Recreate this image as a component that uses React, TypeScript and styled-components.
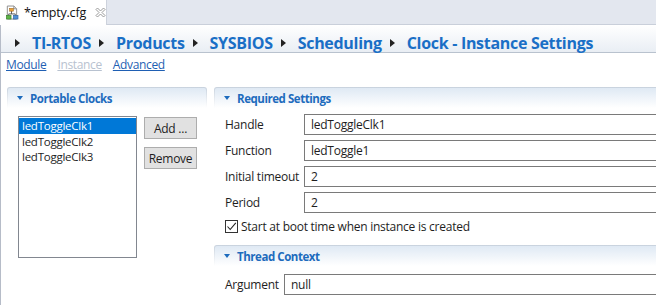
import styled, {createGlobalStyle} from 'styled-components'

const GlobalStyle = createGlobalStyle`
  html, body {
    margin: 0;
    padding: 0;
    background: #fff;
    overflow: hidden;
  }
  body {
    font-family: "Open Sans", "Noto Sans", sans-serif;
    font-size: 12px;
    letter-spacing: -0.25px;
    color: #1e1e1e;
  }
`

const Window = styled.div`
  width: 760px;
  height: 305px;
  display: flex;
  flex-direction: column;
`

const TabStrip = styled.div`
  height: 24px;
  display: flex;
  background: #e3e7ef;
  border-bottom: 1px solid #c9cfda;
`

const Tab = styled.div`
  width: 107px;
  height: 25px;
  box-sizing: border-box;
  display: flex;
  align-items: center;
  gap: 4px;
  padding-left: 5px;
  background: #fff;
  border-right: 1px solid #cdd2dc;
  margin-bottom: -1px;
  font-size: 12.5px;
  letter-spacing: -0.2px;
  color: #111;
`

const TabClose = styled.span`
  display: flex;
  margin-left: 5px;
`

const Editor = styled.div`
  flex: 1;
  display: flex;
  flex-direction: column;
  border-left: 1px solid #b6bcc8;
`

const Breadcrumb = styled.div`
  height: 28px;
  box-sizing: border-box;
  display: flex;
  align-items: center;
  padding: 8px 0 0 14px;
  background: linear-gradient(#ffffff, #e9eef4);
  border-bottom: 1px solid #b9c2ce;
`

const Crumb = styled.span`
  display: flex;
  align-items: center;
  gap: 12px;
  margin-right: 8px;
  font-size: 16px;
  font-weight: 700;
  color: #1a6fc6;
  letter-spacing: -0.3px;
`

const Arrow = styled.span`
  width: 0;
  height: 0;
  border-top: 4px solid transparent;
  border-bottom: 4px solid transparent;
  border-left: 5px solid #222;
`

const LinkRow = styled.div`
  height: 22px;
  display: flex;
  align-items: center;
  gap: 11px;
  padding-left: 5px;
`

const PageLink = styled.span<{$disabled?: boolean}>`
  font-size: 12px;
  letter-spacing: -0.35px;
  text-decoration: underline;
  color: ${({$disabled}) => ($disabled ? '#b8c2d0' : '#1f5fb3')};
`

const Columns = styled.div`
  display: flex;
  gap: 7px;
  padding: 12px 0 0 6px;
`

const Section = styled.div<{$width?: number}>`
  display: flex;
  flex-direction: column;
  width: ${({$width}) => ($width ? `${$width}px` : 'auto')};
  flex: ${({$width}) => ($width ? 'none' : '1')};
`

const SectionHeader = styled.div`
  height: 21px;
  box-sizing: border-box;
  display: flex;
  align-items: center;
  gap: 7px;
  padding-left: 9px;
  border: 1px solid transparent;
  border-bottom: 0;
  border-radius: 3px 3px 0 0;
  background: linear-gradient(#dfe9f4, #ffffff) padding-box,
    linear-gradient(#c8d2de, #ffffff) border-box;
  font-weight: 700;
  font-size: 11.5px;
  color: #1d6bbd;
  letter-spacing: -0.45px;
`

const Caret = styled.span`
  width: 0;
  height: 0;
  border-left: 3.5px solid transparent;
  border-right: 3.5px solid transparent;
  border-top: 4px solid #1d6bbd;
`

const ClocksBody = styled.div`
  display: flex;
  gap: 7px;
  padding: 8px 0 0 11px;
`

const List = styled.div`
  width: 119px;
  height: 142px;
  box-sizing: border-box;
  border: 1px solid #828790;
  padding-top: 1px;
`

const ListItem = styled.div<{$selected?: boolean}>`
  height: 15.5px;
  line-height: 15.5px;
  padding-left: 3px;
  font-size: 11.5px;
  background: ${({$selected}) => ($selected ? '#0078d7' : 'transparent')};
  color: ${({$selected}) => ($selected ? '#fff' : '#1e1e1e')};
`

const ButtonColumn = styled.div`
  display: flex;
  flex-direction: column;
  gap: 8px;
  padding-top: 1px;
`

const Button = styled.button`
  width: 53px;
  height: 22px;
  padding: 0;
  background: #e1e1e1;
  border: 1px solid #adadad;
  font-family: inherit;
  font-size: 12px;
  letter-spacing: -0.25px;
  color: #1e1e1e;
`

const Form = styled.div<{$label: number; $top: number}>`
  display: grid;
  grid-template-columns: ${({$label}) => $label}px 1fr;
  grid-auto-rows: 21px;
  row-gap: 5px;
  align-items: center;
  padding: ${({$top}) => $top}px 0 0 11px;
`

const Label = styled.span`
  white-space: nowrap;
`

const Field = styled.div`
  height: 21px;
  box-sizing: border-box;
  display: flex;
  align-items: center;
  padding-left: 6px;
  border: 1px solid #7a7a7a;
  background: #fff;
`

const CheckRow = styled.div`
  display: flex;
  align-items: center;
  gap: 3px;
  padding: 5px 0 0 11px;
`

const CheckBox = styled.span`
  width: 13px;
  height: 13px;
  box-sizing: border-box;
  display: flex;
  align-items: center;
  justify-content: center;
  border: 1px solid #333;
  background: #fff;
`

const SubSection = styled.div`
  margin-top: 10px;
  display: flex;
  flex-direction: column;
`

function CfgIcon() {
  return (
    <svg width="16" height="16" viewBox="0 0 16 16">
      <path d="M2.5 0.5h7l3 3v11h-10z" fill="#fff" stroke="#8a8a8a" />
      <path d="M9.5 0.5v3h3" fill="none" stroke="#8a8a8a" />
      <path d="M7 5v4M4 9h7M4 9v2M11 9v2" stroke="#555" strokeWidth="1" fill="none" />
      <rect x="5" y="3" width="4" height="3" fill="#e8a33a" stroke="#a2671a" strokeWidth="0.6" />
      <rect x="1.5" y="10.5" width="5" height="4" fill="#5eb347" stroke="#2f7a22" strokeWidth="0.6" />
      <rect x="9" y="10.5" width="5" height="4" fill="#4f8fd6" stroke="#285c9c" strokeWidth="0.6" />
    </svg>
  )
}

function CloseIcon() {
  return (
    <svg width="11" height="11" viewBox="0 0 11 11">
      <path
        d="M1 2.5L2.5 1L5.5 4L8.5 1L10 2.5L7 5.5L10 8.5L8.5 10L5.5 7L2.5 10L1 8.5L4 5.5Z"
        fill="#fff"
        stroke="#8e8e8e"
        strokeWidth="0.9"
        strokeLinejoin="round"
      />
    </svg>
  )
}

const crumbs = ['TI-RTOS', 'Products', 'SYSBIOS', 'Scheduling', 'Clock - Instance Settings']
const clocks = ['ledToggleClk1', 'ledToggleClk2', 'ledToggleClk3']
const settings = [
  ['Handle', 'ledToggleClk1'],
  ['Function', 'ledToggle1'],
  ['Initial timeout', '2'],
  ['Period', '2'],
]

export default function App() {
  return (
    <Window>
      <GlobalStyle />
      <TabStrip>
        <Tab>
          <CfgIcon />
          <span>*empty.cfg</span>
          <TabClose>
            <CloseIcon />
          </TabClose>
        </Tab>
      </TabStrip>
      <Editor>
        <Breadcrumb>
          {crumbs.map((c) => (
            <Crumb key={c}>
              <Arrow />
              {c}
            </Crumb>
          ))}
        </Breadcrumb>
        <LinkRow>
          <PageLink>Module</PageLink>
          <PageLink $disabled>Instance</PageLink>
          <PageLink>Advanced</PageLink>
        </LinkRow>
        <Columns>
          <Section $width={200}>
            <SectionHeader>
              <Caret />
              Portable Clocks
            </SectionHeader>
            <ClocksBody>
              <List>
                {clocks.map((c, i) => (
                  <ListItem key={c} $selected={i === 0}>
                    {c}
                  </ListItem>
                ))}
              </List>
              <ButtonColumn>
                <Button>Add ...</Button>
                <Button>Remove</Button>
              </ButtonColumn>
            </ClocksBody>
          </Section>
          <Section>
            <SectionHeader>
              <Caret />
              Required Settings
            </SectionHeader>
            <Form $label={79} $top={6}>
              {settings.map(([label, value]) => (
                <>
                  <Label key={label}>{label}</Label>
                  <Field key={label + '-v'}>{value}</Field>
                </>
              ))}
            </Form>
            <CheckRow>
              <CheckBox>
                <svg width="11" height="11" viewBox="0 0 11 11">
                  <path d="M1.5 5.5L4.2 8.5L9.8 1.8" fill="none" stroke="#222" strokeWidth="1.1" />
                </svg>
              </CheckBox>
              Start at boot time when instance is created
            </CheckRow>
            <SubSection>
              <SectionHeader>
                <Caret />
                Thread Context
              </SectionHeader>
              <Form $label={59} $top={8}>
                <Label>Argument</Label>
                <Field>null</Field>
              </Form>
            </SubSection>
          </Section>
        </Columns>
      </Editor>
    </Window>
  )
}
